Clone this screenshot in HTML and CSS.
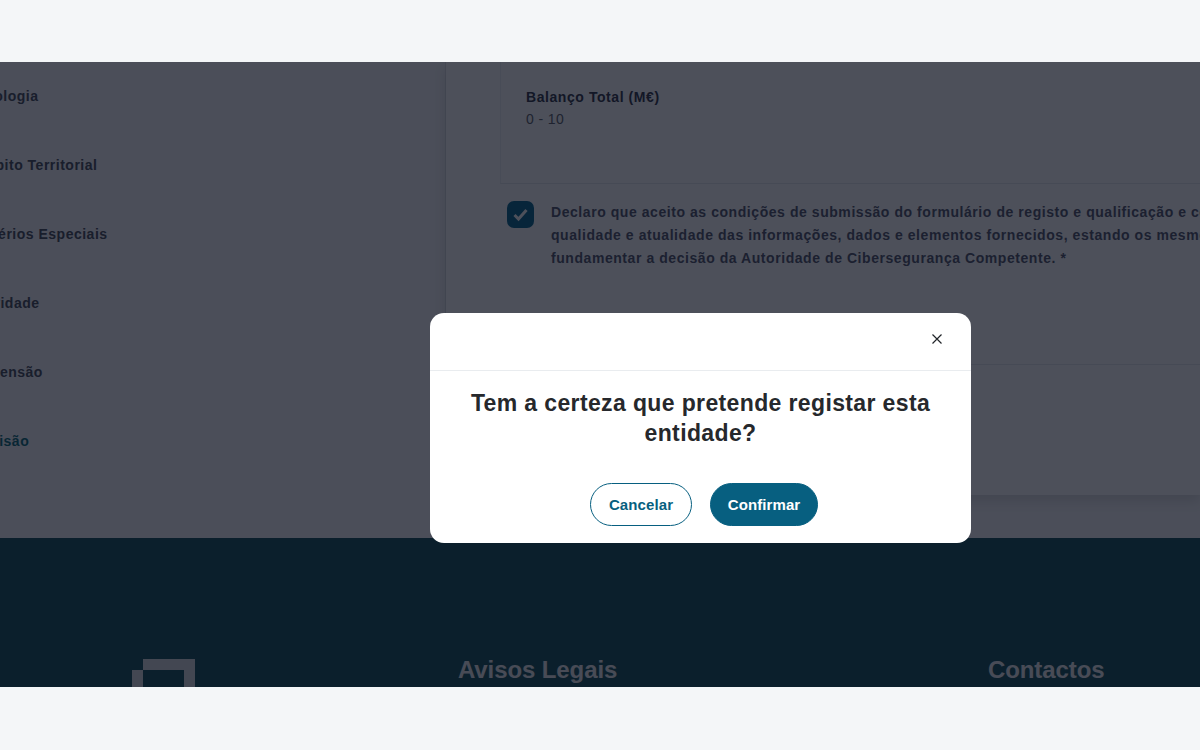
FILE: index.html
```html
<!DOCTYPE html>
<html lang="pt">
<head>
<meta charset="utf-8">
<title>Registo de entidade</title>
<link rel="stylesheet" href="styles.css">
</head>
<body>
<div class="stage">
  <main class="main">
    <nav class="side">
      <a class="side-item">Tipologia</a>
      <a class="side-item">Âmbito Territorial</a>
      <a class="side-item">Critérios Especiais</a>
      <a class="side-item">Atividade</a>
      <a class="side-item">Dimensão</a>
      <a class="side-item side-item-active">Revisão</a>
    </nav>
    <section class="panel">
      <div class="summary">
        <div class="summary-label">Balanço Total (M€)</div>
        <div class="summary-value">0 - 10</div>
      </div>
      <div class="declaration">
        <span class="checkbox">
          <svg viewBox="0 0 27 27" width="27" height="27"><path d="M7.500 14l4 4 8-9" fill="none" stroke="#fff" stroke-width="3"/></svg>
        </span>
        <p class="declaration-text">
          <span class="line">Declaro que aceito as condições de submissão do formulário de registo e qualificação e confirmo a veracidade,</span>
          <span class="line">qualidade e atualidade das informações, dados e elementos fornecidos, estando os mesmos sujeitos a verificação para</span>
          <span class="line">fundamentar a decisão da Autoridade de Cibersegurança Competente. *</span>
        </p>
      </div>
    </section>
  </main>
  <footer class="footer">
    <svg class="footer-logo" viewBox="0 0 63 40" width="63" height="40"><path d="M11 0h52v40H52V11H11z M0 11h11v29H0z" fill="#dcdee2"/></svg>
    <h2 class="footer-title footer-legal">Avisos Legais</h2>
    <h2 class="footer-title footer-contacts">Contactos</h2>
  </footer>
  <div class="overlay"></div>
  <div class="modal" role="dialog">
    <header class="modal-head">
      <svg class="modal-close" viewBox="0 0 10 10" width="10" height="10"><path d="M.5.5l9 9M9.500.5l-9 9" stroke="#212529" stroke-width="1.2" fill="none"/></svg>
    </header>
    <div class="modal-body">
      <h1 class="modal-title">Tem a certeza que pretende registar esta entidade?</h1>
      <div class="modal-actions">
        <button class="btn btn-outline">Cancelar</button>
        <button class="btn btn-solid">Confirmar</button>
      </div>
    </div>
  </div>
</div>
</body>
</html>
```

FILE: styles.css
```css
* { box-sizing: border-box; }
html, body { margin: 0; height: 100%; }
body {
  background: #f4f6f8;
  padding-top: 62px;
  font-family: "Liberation Sans", Arial, sans-serif;
  overflow: hidden;
}
.stage {
  position: relative;
  height: 625px;
  overflow: hidden;
  background: #fff;
}
.main { display: flex; height: 476px; background: #f6f7f9; }
.side {
  flex: 0 0 474px;
  margin-left: -28px;
  padding-top: 1px;
  border-right: 1px solid #e2e4e8;
  display: flex;
  flex-direction: column;
}
.side-item {
  height: 69px;
  line-height: 66px;
  font-size: 14px;
  font-weight: 700;
  letter-spacing: .5px;
  color: #474c5a;
  white-space: nowrap;
}
.side-item-active { color: #0a6a78; }
.panel {
  flex: 1;
  min-width: 0;
  height: 433px;
  padding-left: 54px;
  background: #fff;
  box-shadow: 0 6px 12px rgba(0,0,0,.12);
  overflow: hidden;
}
.summary {
  height: 122px;
  padding: 26px 0 0 25px;
  border-left: 1px solid #eef0f2;
  border-bottom: 1px solid #e6e8eb;
}
.summary-label { font-size: 14px; font-weight: 700; letter-spacing: .57px; line-height: 18px; color: #2f3346; }
.summary-value { margin-top: 4px; font-size: 14px; letter-spacing: .4px; line-height: 18px; color: #5a5f68; }
.declaration {
  display: flex;
  gap: 17px;
  height: 181px;
  margin-left: -54px;
  padding: 17px 0 0 61px;
  border-bottom: 1px solid #e6e8eb;
}
.checkbox { flex: 0 0 27px; height: 27px; border-radius: 7px; background: #05668d; }
.declaration-text { margin: 0; font-size: 14px; font-weight: 700; letter-spacing: .56px; line-height: 23px; color: #50556a; }
.line { display: block; white-space: nowrap; }
.footer { position: relative; height: 149px; background: #13505a; }
.footer-logo { position: absolute; left: 132px; top: 121px; }
.footer-title { position: absolute; top: 118px; margin: 0; font-size: 24px; font-weight: 700; letter-spacing: -.1px; line-height: 27px; color: #eceef0; }
.footer-legal { left: 458px; }
.footer-contacts { left: 988px; }
.overlay { position: absolute; inset: 0; background: rgba(9,13,26,.72); }
.modal {
  position: absolute;
  left: 430px;
  top: 251px;
  width: 541px;
  height: 230px;
  background: #fff;
  border-radius: 14px;
}
.modal-head {
  height: 58px;
  border-bottom: 1px solid #e9ecef;
  display: flex;
  justify-content: flex-end;
  padding: 21px 29px 0 0;
}
.modal-close { display: block; }
.modal-body { padding: 17px 32px 0; text-align: center; }
.modal-title { margin: 0; font-size: 23px; line-height: 30px; font-weight: 700; letter-spacing: .37px; color: #26282c; }
.modal-actions { display: flex; justify-content: center; gap: 18px; margin-top: 35px; padding-left: 7px; }
.btn {
  height: 43px;
  border-radius: 22px;
  font: 700 15px "Liberation Sans", Arial, sans-serif;
  letter-spacing: .1px;
  padding: 0;
}
.btn-outline { width: 102px; background: #fff; color: #075f80; border: 1px solid #075f80; }
.btn-solid { width: 108px; background: #075f80; color: #fff; border: 1px solid #075f80; }
```
